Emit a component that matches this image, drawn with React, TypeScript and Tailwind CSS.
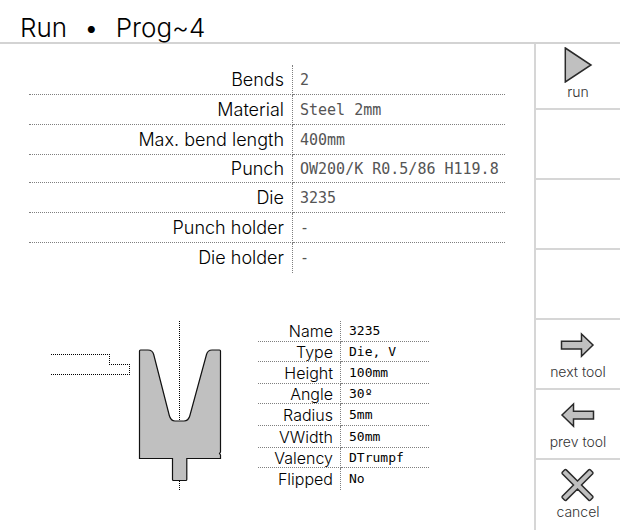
import type { ReactNode } from "react";

type Row = { label: string; value: string; height: string };

const programRows: Row[] = [
  { label: "Bends", value: "2", height: "h-[30px]" },
  { label: "Material", value: "Steel 2mm", height: "h-[30px]" },
  { label: "Max. bend length", value: "400mm", height: "h-[30px]" },
  { label: "Punch", value: "OW200/K R0.5/86 H119.8", height: "h-[28px]" },
  { label: "Die", value: "3235", height: "h-[30px]" },
  { label: "Punch holder", value: "-", height: "h-[30px]" },
  { label: "Die holder", value: "-", height: "h-[30px]" },
];

const toolRows: Row[] = [
  { label: "Name", value: "3235", height: "h-[21px]" },
  { label: "Type", value: "Die, V", height: "h-[20px]" },
  { label: "Height", value: "100mm", height: "h-[22px]" },
  { label: "Angle", value: "30º", height: "h-[20px]" },
  { label: "Radius", value: "5mm", height: "h-[22px]" },
  { label: "VWidth", value: "50mm", height: "h-[22px]" },
  { label: "Valency", value: "DTrumpf", height: "h-[20px]" },
  { label: "Flipped", value: "No", height: "h-[22px]" },
];

function ProgramTable() {
  return (
    <table className="w-full table-fixed border-separate border-spacing-0">
      <tbody>
        {programRows.map((row, i) => {
          const line = i < programRows.length - 1 ? "border-b" : "";
          return (
            <tr key={row.label} className={row.height}>
              <th
                scope="row"
                className={`w-[264px] border-r border-dotted border-[#7f7f7f] p-0 pr-2 text-right text-lg leading-6 font-light ${line}`}
              >
                {row.label}
              </th>
              <td
                className={`border-dotted border-[#7f7f7f] p-0 pl-[7px] font-['DejaVu_Sans_Mono','Liberation_Mono',monospace] text-[15px] leading-6 whitespace-nowrap text-[#555] ${line}`}
              >
                {row.value}
              </td>
            </tr>
          );
        })}
      </tbody>
    </table>
  );
}

function ToolTable() {
  return (
    <table className="w-[171px] table-fixed border-separate border-spacing-0">
      <tbody>
        {toolRows.map((row, i) => {
          const line = i < toolRows.length - 1 ? "border-b" : "";
          return (
            <tr key={row.label} className={row.height}>
              <th
                scope="row"
                className={`w-[83px] border-r border-dotted border-[#7f7f7f] p-0 pr-[7px] text-right text-base leading-[18px] font-light ${line}`}
              >
                {row.label}
              </th>
              <td
                className={`border-dotted border-[#7f7f7f] p-0 pl-2 font-['DejaVu_Sans_Mono','Liberation_Mono',monospace] text-[13px] leading-[18px] whitespace-nowrap ${line}`}
              >
                {row.value}
              </td>
            </tr>
          );
        })}
      </tbody>
    </table>
  );
}

function DieDrawing() {
  return (
    <svg
      width="171"
      height="169"
      viewBox="0 0 171 169"
      fill="none"
      stroke="#000"
      className="shrink-0"
      role="img"
      aria-label="Die profile"
    >
      <g strokeDasharray="1 1" shapeRendering="crispEdges">
        <path d="M0 33.5H59" />
        <path d="M58.5 33V43" />
        <path d="M58 43.5H79" />
        <path d="M78.5 43V54" />
        <path d="M0 53.5H79" />
        <path d="M128.5 0V169" />
      </g>
      <path
        d="M88.5 30Q88.5 29 89.5 29H97Q101.5 29 102.7 33.5L118.3 94.5Q119.8 100 124 100H133Q137.5 100 138.9 94.5L155.5 33.5Q156.8 29 161 29H168.5Q169.5 29 169.5 30V131L168.5 132.5L169.5 134V137.5H135.8V158.5Q135.8 159.5 134.8 159.5H122.5Q121.5 159.5 121.5 158.5V137.5H88.5Z"
        fill="#c0c0c0"
        stroke="#111"
        strokeWidth="1.2"
      />
    </svg>
  );
}

function Icon({ d }: { d: string }) {
  return (
    <svg
      width="36"
      height="36"
      viewBox="0 0 36 36"
      fill="#c0c0c0"
      stroke="#2a2a2a"
      strokeWidth="1.5"
      className="shrink-0"
      aria-hidden="true"
    >
      <path d={d} />
    </svg>
  );
}

function Slot({ children, first = false, last = false }: { children?: ReactNode; first?: boolean; last?: boolean }) {
  return (
    <div
      className={`flex flex-col border-b-2 ${first ? "h-[66px]" : "h-[70px]"} ${
        last ? "border-transparent" : "border-[#d6d6d6]"
      }`}
    >
      {children}
    </div>
  );
}

function ToolButton({ label, d }: { label: string; d: string }) {
  return (
    <button
      type="button"
      className="flex w-full grow flex-col items-center justify-end pb-[7px] text-sm leading-[18px] font-light text-[#333]"
    >
      <Icon d={d} />
      {label}
    </button>
  );
}

export default function App() {
  return (
    <div className="flex min-h-screen flex-col bg-white font-['Inter','Liberation_Sans',sans-serif] text-black">
      <header className="flex h-11 items-end border-b-2 border-[#d3d3d3] pl-5">
        <h1 className="flex gap-[17px] text-[26px] leading-7 font-light">
          <span>Run</span>
          <span>•</span>
          <span>Prog~4</span>
        </h1>
      </header>
      <div className="flex grow">
        <main className="min-w-0 grow pt-[21px]">
          <div className="mx-[29px]">
            <ProgramTable />
          </div>
          <div className="mt-12 ml-[51px] flex items-start gap-9">
            <DieDrawing />
            <ToolTable />
          </div>
        </main>
        <nav className="w-[86px] shrink-0 border-l-2 border-[#d6d6d6]" aria-label="Actions">
          <Slot first>
            <ToolButton label="run" d="M5.3 1L31 18L5.3 35Z" />
          </Slot>
          <Slot />
          <Slot />
          <Slot />
          <Slot>
            <ToolButton label="next tool" d="M1.5 14.3H21.5V7L33 18L21.5 29.3V22H1.5Z" />
          </Slot>
          <Slot>
            <ToolButton label="prev tool" d="M33.5 14.3H13.5V7L2 18L13.5 29.3V22H33.5Z" />
          </Slot>
          <Slot last>
            <ToolButton
              label="cancel"
              d="M2.3 5.2L4.7 2.8Q5.5 2.2 6.3 2.9L17.5 14L28.7 2.9Q29.5 2.2 30.3 2.8L32.7 5.2Q33.3 6 32.7 6.8L21.5 18L32.7 29.2Q33.3 30 32.7 30.8L30.3 33.2Q29.5 33.8 28.7 33.1L17.5 22L6.3 33.1Q5.5 33.8 4.7 33.2L2.3 30.8Q1.7 30 2.3 29.2L13.5 18L2.3 6.8Q1.7 6 2.3 5.2Z"
            />
          </Slot>
        </nav>
      </div>
    </div>
  );
}
